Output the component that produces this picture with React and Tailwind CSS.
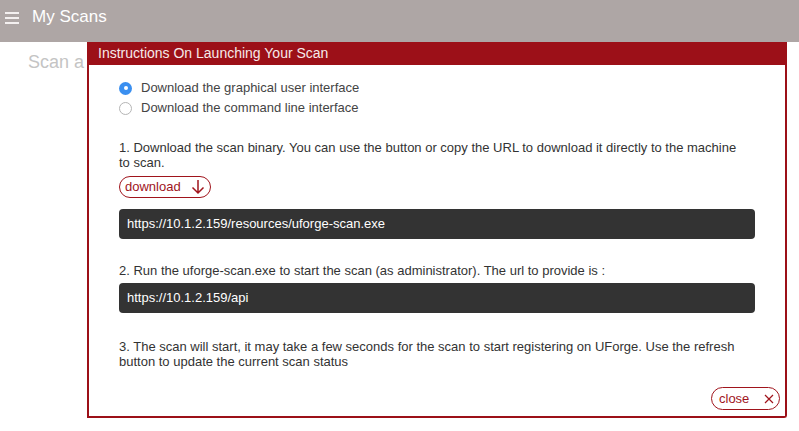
import React from "react";

export default function App() {
  const font = { fontFamily: '"Liberation Sans", Arial, sans-serif' };
  return (
    <div className="relative w-[799px] h-[431px] bg-white overflow-hidden text-[#333]" style={font}>
      <div className="h-[42px] bg-[#aea6a5] flex items-start pt-[6px]">
        <svg width="14" height="12" viewBox="0 0 14 12" className="ml-[5px] mt-[6px]">
          <rect x="0" y="0" width="14" height="2" fill="#f4f0f0" />
          <rect x="0" y="5" width="14" height="2" fill="#f4f0f0" />
          <rect x="0" y="10" width="14" height="2" fill="#f4f0f0" />
        </svg>
        <span className="ml-[13px] text-[17px] leading-[22px] text-white">My Scans</span>
      </div>
      <div className="pl-[28px] pt-[9px] text-[18px] leading-[22px] text-[#c4c4c4]">Scan a</div>

      <div className="absolute left-[87px] top-[42px] w-[700px] border-2 border-t-0 border-[#9c1018] rounded-br-[3px] bg-white">
        <div className="h-[23px] bg-[#9c1018] text-[14px] leading-[23px] text-[#f6eaea] pl-[9px]">
          Instructions On Launching Your Scan
        </div>
        <div className="pl-[30px] pr-[30px] pt-[13px] text-[13px]">
          <div className="flex items-center h-[20px]">
            <span className="w-[13px] h-[13px] rounded-full bg-[#3a8ff0] flex items-center justify-center">
              <span className="w-[4px] h-[4px] rounded-full bg-white" />
            </span>
            <span className="ml-[9px] text-[#444]">Download the graphical user interface</span>
          </div>
          <div className="flex items-center h-[20px]">
            <span className="w-[13px] h-[13px] rounded-full border border-[#b5b5b5] bg-white" />
            <span className="ml-[9px] text-[#444]">Download the command line interface</span>
          </div>
          <p className="mt-[22px] leading-[15px] text-[#333] pr-[8px]">
            1. Download the scan binary. You can use the button or copy the URL to download it directly to the machine to scan.
          </p>
          <button className="mt-[6px] h-[22px] w-[92px] border border-[#a0141c] rounded-full flex items-center pl-[5px] text-[#a0141c] text-[13px]">
            <span>download</span>
            <svg width="14" height="16" viewBox="0 0 14 16" className="ml-[10px]">
              <path d="M7 1 V14 M1.5 8.5 L7 14 L12.5 8.5" stroke="#a0141c" strokeWidth="1.5" fill="none" />
            </svg>
          </button>
          <div className="mt-[11px] h-[30px] bg-[#333] rounded-[4px] text-white flex items-center pl-[8px]">
            https://10.1.2.159/resources/uforge-scan.exe
          </div>
          <p className="mt-[24px] leading-[15px]">
            2. Run the uforge-scan.exe to start the scan (as administrator). The url to provide is :
          </p>
          <div className="mt-[5px] h-[30px] bg-[#333] rounded-[4px] text-white flex items-center pl-[8px]">
            https://10.1.2.159/api
          </div>
          <p className="mt-[26px] leading-[15px] pr-[10px]">
            3. The scan will start, it may take a few seconds for the scan to start registering on UForge. Use the refresh button to update the current scan status
          </p>
        </div>
        <div className="flex justify-end pr-[5px] pb-[6px] mt-[18px]">
          <button className="h-[23px] w-[69px] border border-[#a0141c] rounded-full flex items-center pl-[7px] text-[#a0141c] text-[13px]">
            <span>close</span>
            <svg width="10" height="10" viewBox="0 0 10 10" className="ml-[15px]">
              <path d="M1 1 L9 9 M9 1 L1 9" stroke="#a0141c" strokeWidth="1.2" fill="none" />
            </svg>
          </button>
        </div>
      </div>
    </div>
  );
}
